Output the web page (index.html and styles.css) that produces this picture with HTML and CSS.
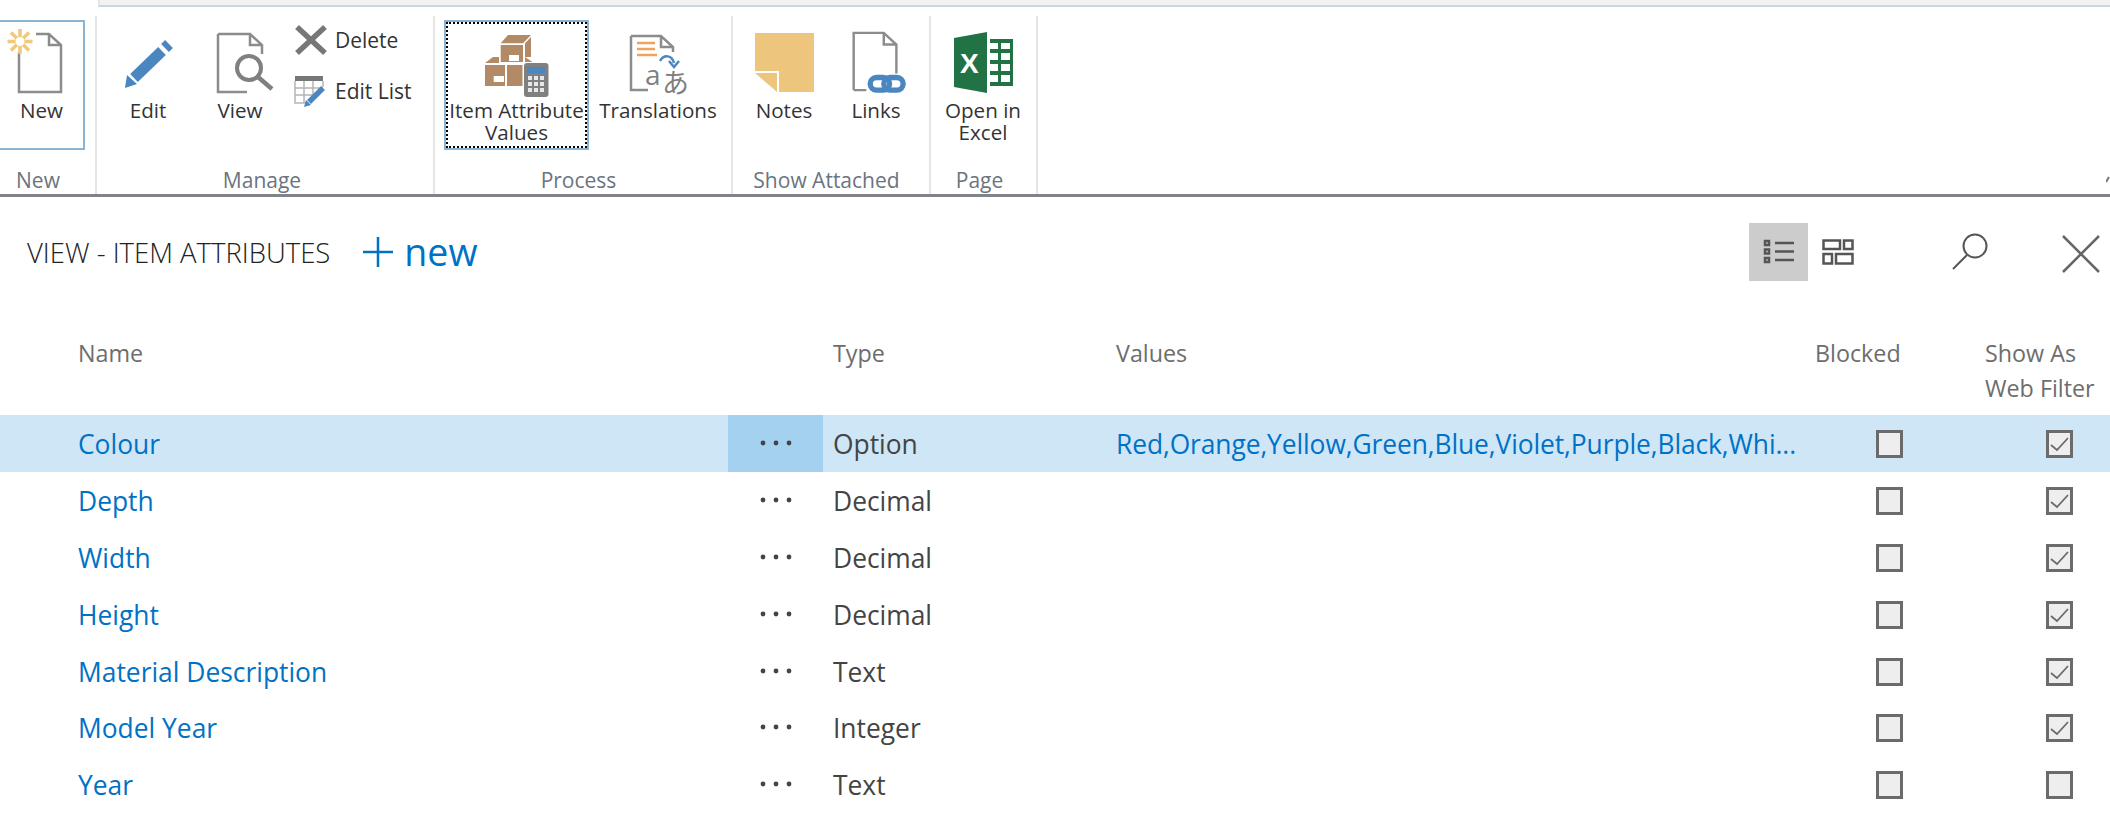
FILE: index.html
```html
<!DOCTYPE html>
<html lang="en">
<head>
  <meta charset="UTF-8">
  <title>View - Item Attributes</title>
  <link rel="stylesheet" href="styles.css">
</head>
<body>

<div class="topbar"></div>

<nav class="ribbon">
  <section class="group group-new">
    <div class="group-items">
      <button class="big-btn btn-new boxed">
        <svg class="icon" width="84" height="66" viewBox="0 0 84 66">
          <path class="doc" d="M19 24V64H61V17L49 6H36M49 6V17H61"/>
          <g class="sun">
            <path d="M20 1V26M7.500 13.500H32.500M11 4.500L29 22.500M29 4.500L11 22.500"/>
          </g>
          <circle cx="20" cy="13.500" r="4.500" fill="#fff"/>
        </svg>
        <span class="btn-label">New</span>
      </button>
    </div>
    <div class="group-label">New</div>
  </section>

  <section class="group group-manage">
    <div class="group-items">
      <button class="big-btn btn-edit">
        <svg class="icon" width="64" height="66" viewBox="0 0 64 66">
          <path d="M18 50L46 23" stroke="#4a86c0" stroke-width="11" fill="none"/>
          <path d="M49 20L53 16" stroke="#4a86c0" stroke-width="11" fill="none"/>
          <path d="M9 60L11 47L21 56Z" fill="#4a86c0"/>
        </svg>
        <span class="btn-label">Edit</span>
      </button>
      <button class="big-btn btn-view">
        <svg class="icon" width="70" height="66" viewBox="0 0 70 66">
          <path class="doc" d="M13 6V64H42M57 26V17L45 6H13M45 6V17H57"/>
          <circle cx="44" cy="40" r="12" fill="#fff" stroke="#808080" stroke-width="4"/>
          <path d="M53 49L67 61" stroke="#808080" stroke-width="4.500" fill="none"/>
        </svg>
        <span class="btn-label">View</span>
      </button>
      <div class="small-btns">
        <button class="small-btn">
          <svg width="34" height="32" viewBox="0 0 34 32">
            <path d="M3 3L31 29M31 3L3 29" stroke="#777" stroke-width="5.500" fill="none"/>
          </svg>
          <span class="btn-label">Delete</span>
        </button>
        <button class="small-btn">
          <svg width="34" height="32" viewBox="0 0 34 32">
            <rect x="1" y="1" width="28" height="5" fill="#777"/>
            <path d="M1 6V28H12M29 6V12M1 13H29M1 20H18M10 6V28M19 6V20" stroke="#b5b5b5" stroke-width="1.500" fill="none"/>
            <path d="M15 27L29 13" stroke="#4a86c0" stroke-width="5.500" fill="none"/>
            <path d="M10 32L12 25L17 30Z" fill="#4a86c0"/>
          </svg>
          <span class="btn-label">Edit List</span>
        </button>
      </div>
    </div>
    <div class="group-label">Manage</div>
  </section>

  <section class="group group-process">
    <div class="group-items">
      <button class="big-btn btn-attr boxed focused">
        <svg class="icon" width="66" height="66" viewBox="0 -6 66 66">
          <g fill="#b38a66">
            <path d="M24 1H47L39 9.300H16.700Z"/>
            <path d="M41 9.300L47 3V23L41 23Z"/>
            <rect x="16.700" y="11" width="22.300" height="17"/>
            <path d="M9 23H15V29H1Z"/>
            <path d="M41 23L50 29H41Z"/>
            <rect x="1" y="31" width="20" height="21"/>
            <rect x="23" y="31" width="20" height="21"/>
          </g>
          <rect x="25" y="21" width="10" height="6" fill="#fff"/>
          <rect x="9.700" y="42" width="10.300" height="6" fill="#fff"/>
          <rect x="38.500" y="28" width="27" height="36" rx="3" fill="#fff"/>
          <rect x="40" y="29" width="24.500" height="34" rx="3" fill="#808080"/>
          <rect x="43" y="33" width="18" height="6" fill="#4a86c0"/>
          <g fill="#e8e8e8">
            <rect x="44" y="42" width="4" height="4"/><rect x="50" y="42" width="4" height="4"/><rect x="56" y="42" width="4" height="4"/>
            <rect x="44" y="48" width="4" height="4"/><rect x="50" y="48" width="4" height="4"/><rect x="56" y="48" width="4" height="4"/>
            <rect x="44" y="54" width="4" height="4"/><rect x="50" y="54" width="4" height="4"/><rect x="56" y="54" width="4" height="4"/>
          </g>
        </svg>
        <span class="btn-label">Item Attribute Values</span>
      </button>
      <button class="big-btn btn-trans">
        <svg class="icon" width="72" height="66" viewBox="0 0 72 66">
          <path class="doc" d="M9 8V62H26M51 24V19L39 8H9M39 8V19H51"/>
          <path d="M15 15H33M15 21H33M15 27H35" stroke="#f0a35e" stroke-width="2.500" fill="none"/>
          <path d="M38 33C42 26 50 27 52 35M47 33L52 39L57 33" stroke="#4a86c0" stroke-width="2.500" fill="none"/>
          <text x="23" y="57" class="glyph-a">a</text>
          <text x="40" y="65" class="glyph-jp">あ</text>
        </svg>
        <span class="btn-label">Translations</span>
      </button>
    </div>
    <div class="group-label">Process</div>
  </section>

  <section class="group group-attached">
    <div class="group-items">
      <button class="big-btn btn-notes">
        <svg class="icon" width="64" height="66" viewBox="0 0 64 66">
          <path d="M3 5H62V64H27V43H3Z" fill="#edc57c"/>
          <path d="M3 45H25V64Z" fill="#edc57c"/>
        </svg>
        <span class="btn-label">Notes</span>
      </button>
      <button class="big-btn btn-links">
        <svg class="icon" width="64" height="68" viewBox="0 0 64 68">
          <path class="doc" d="M9 64V5H40L53 17V47M40 5V17H53M9 64H22"/>
          <rect x="26" y="51" width="20" height="13" rx="6.500" fill="none" stroke="#4a86c0" stroke-width="5.500"/>
          <rect x="40" y="51" width="20" height="13" rx="6.500" fill="none" stroke="#4a86c0" stroke-width="5.500"/>
        </svg>
        <span class="btn-label">Links</span>
      </button>
    </div>
    <div class="group-label">Show Attached</div>
  </section>

  <section class="group group-page">
    <div class="group-items">
      <button class="big-btn btn-excel">
        <svg class="icon" width="64" height="66" viewBox="0 0 64 66">
          <path d="M3 10L36 4V65L3 59Z" fill="#217346"/>
          <rect x="39" y="11" width="23" height="47" fill="#217346"/>
          <g fill="#fff">
            <rect x="39" y="15" width="8" height="6"/><rect x="50" y="15" width="9" height="6"/>
            <rect x="39" y="25" width="8" height="7"/><rect x="50" y="25" width="9" height="7"/>
            <rect x="39" y="36" width="8" height="7"/><rect x="50" y="36" width="9" height="7"/>
            <rect x="39" y="47" width="8" height="7"/><rect x="50" y="47" width="9" height="7"/>
          </g>
          <text x="9" y="45" class="glyph-x">X</text>
        </svg>
        <span class="btn-label">Open in Excel</span>
      </button>
    </div>
    <div class="group-label">Page</div>
  </section>

  <svg class="collapse" width="4" height="10" viewBox="0 0 4 10">
    <path d="M0 8L3 3" stroke="#777" stroke-width="2" fill="none"/>
  </svg>
</nav>

<header class="page-head">
  <h1 class="page-title">VIEW - ITEM ATTRIBUTES</h1>
  <a class="new-link">
    <svg width="32" height="32" viewBox="0 0 32 32">
      <path d="M1 16H31M16 1V31" stroke="#0072c6" stroke-width="2.500" fill="none"/>
    </svg>
    <span>new</span>
  </a>
  <div class="tools">
    <span class="tool tool-active">
      <svg width="32" height="26" viewBox="0 0 32 26">
        <path d="M12 4H31M12 12.500H31M12 21H31" stroke="#555" stroke-width="2.500" fill="none"/>
        <path d="M2 2H6V6H2ZM2 10.500H6V14.500H2ZM2 19H6V23H2Z" fill="none" stroke="#555" stroke-width="2.500"/>
      </svg>
    </span>
    <span class="tool">
      <svg width="32" height="26" viewBox="0 0 32 26">
        <path d="M1.500 1.500H18V10H1.500ZM22 1.500H30.500V10H22ZM1.500 15H10V24.500H1.500ZM14 15H30.500V24.500H14Z" fill="none" stroke="#555" stroke-width="2.500"/>
      </svg>
    </span>
    <svg class="tool-search" width="38" height="38" viewBox="0 0 38 38">
      <circle cx="24" cy="13" r="11.500" fill="none" stroke="#555" stroke-width="2"/>
      <path d="M16 22L2 36" stroke="#555" stroke-width="2" fill="none"/>
    </svg>
    <svg class="tool-close" width="40" height="40" viewBox="0 0 40 40">
      <path d="M2 2L38 38M38 2L2 38" stroke="#666" stroke-width="2.500" fill="none"/>
    </svg>
  </div>
</header>

<div class="list">
  <div class="row head-row">
    <div class="cell cell-name">Name</div>
    <div class="cell"></div>
    <div class="cell cell-type">Type</div>
    <div class="cell cell-values">Values</div>
    <div class="cell">Blocked</div>
    <div class="cell">Show As<br>Web Filter</div>
  </div>

  <div class="row selected">
    <a class="cell cell-name">Colour</a>
    <div class="cell cell-dots"><svg class="dots" width="32" height="6" viewBox="0 0 32 6"><circle cx="3" cy="3" r="2.400"/><circle cx="16" cy="3" r="2.400"/><circle cx="29" cy="3" r="2.400"/></svg></div>
    <div class="cell cell-type">Option</div>
    <a class="cell cell-values">Red,Orange,Yellow,Green,Blue,Violet,Purple,Black,Whi...</a>
    <div class="cell cell-check"><span class="check"></span></div>
    <div class="cell cell-check"><span class="check"><svg width="21" height="22" viewBox="0 0 21 22"><path d="M2 12L8 17L19 5" stroke="#6b6b6b" stroke-width="1.800" fill="none"/></svg></span></div>
  </div>

  <div class="row">
    <a class="cell cell-name">Depth</a>
    <div class="cell cell-dots"><svg class="dots" width="32" height="6" viewBox="0 0 32 6"><circle cx="3" cy="3" r="2.400"/><circle cx="16" cy="3" r="2.400"/><circle cx="29" cy="3" r="2.400"/></svg></div>
    <div class="cell cell-type">Decimal</div>
    <div class="cell cell-values"></div>
    <div class="cell cell-check"><span class="check"></span></div>
    <div class="cell cell-check"><span class="check"><svg width="21" height="22" viewBox="0 0 21 22"><path d="M2 12L8 17L19 5" stroke="#6b6b6b" stroke-width="1.800" fill="none"/></svg></span></div>
  </div>

  <div class="row">
    <a class="cell cell-name">Width</a>
    <div class="cell cell-dots"><svg class="dots" width="32" height="6" viewBox="0 0 32 6"><circle cx="3" cy="3" r="2.400"/><circle cx="16" cy="3" r="2.400"/><circle cx="29" cy="3" r="2.400"/></svg></div>
    <div class="cell cell-type">Decimal</div>
    <div class="cell cell-values"></div>
    <div class="cell cell-check"><span class="check"></span></div>
    <div class="cell cell-check"><span class="check"><svg width="21" height="22" viewBox="0 0 21 22"><path d="M2 12L8 17L19 5" stroke="#6b6b6b" stroke-width="1.800" fill="none"/></svg></span></div>
  </div>

  <div class="row">
    <a class="cell cell-name">Height</a>
    <div class="cell cell-dots"><svg class="dots" width="32" height="6" viewBox="0 0 32 6"><circle cx="3" cy="3" r="2.400"/><circle cx="16" cy="3" r="2.400"/><circle cx="29" cy="3" r="2.400"/></svg></div>
    <div class="cell cell-type">Decimal</div>
    <div class="cell cell-values"></div>
    <div class="cell cell-check"><span class="check"></span></div>
    <div class="cell cell-check"><span class="check"><svg width="21" height="22" viewBox="0 0 21 22"><path d="M2 12L8 17L19 5" stroke="#6b6b6b" stroke-width="1.800" fill="none"/></svg></span></div>
  </div>

  <div class="row">
    <a class="cell cell-name">Material Description</a>
    <div class="cell cell-dots"><svg class="dots" width="32" height="6" viewBox="0 0 32 6"><circle cx="3" cy="3" r="2.400"/><circle cx="16" cy="3" r="2.400"/><circle cx="29" cy="3" r="2.400"/></svg></div>
    <div class="cell cell-type">Text</div>
    <div class="cell cell-values"></div>
    <div class="cell cell-check"><span class="check"></span></div>
    <div class="cell cell-check"><span class="check"><svg width="21" height="22" viewBox="0 0 21 22"><path d="M2 12L8 17L19 5" stroke="#6b6b6b" stroke-width="1.800" fill="none"/></svg></span></div>
  </div>

  <div class="row">
    <a class="cell cell-name">Model Year</a>
    <div class="cell cell-dots"><svg class="dots" width="32" height="6" viewBox="0 0 32 6"><circle cx="3" cy="3" r="2.400"/><circle cx="16" cy="3" r="2.400"/><circle cx="29" cy="3" r="2.400"/></svg></div>
    <div class="cell cell-type">Integer</div>
    <div class="cell cell-values"></div>
    <div class="cell cell-check"><span class="check"></span></div>
    <div class="cell cell-check"><span class="check"><svg width="21" height="22" viewBox="0 0 21 22"><path d="M2 12L8 17L19 5" stroke="#6b6b6b" stroke-width="1.800" fill="none"/></svg></span></div>
  </div>

  <div class="row">
    <a class="cell cell-name">Year</a>
    <div class="cell cell-dots"><svg class="dots" width="32" height="6" viewBox="0 0 32 6"><circle cx="3" cy="3" r="2.400"/><circle cx="16" cy="3" r="2.400"/><circle cx="29" cy="3" r="2.400"/></svg></div>
    <div class="cell cell-type">Text</div>
    <div class="cell cell-values"></div>
    <div class="cell cell-check"><span class="check"></span></div>
    <div class="cell cell-check"><span class="check"></span></div>
  </div>
</div>

</body>
</html>
```

FILE: styles.css
```css
html, body {
  height: 100%;
  overflow: hidden;
}

body {
  margin: 0;
  background: white;
  font-family: 'Open Sans', 'Liberation Sans', sans-serif;
  color: #333;
}

/* top strip */
.topbar {
  height: 5px;
  margin-left: 98px;
  background: #f2f2f2;
  border-left: 2px solid #e5e5e5;
  border-bottom: 2px solid #ccd6df;
}

/* ribbon */
.ribbon {
  position: relative;
  display: flex;
  height: 178px;
  margin-top: 9px;
  border-bottom: 3px solid #808488;
  box-sizing: content-box;
}

.group {
  display: flex;
  flex-direction: column;
  box-sizing: border-box;
  padding-top: 4px;
  border-right: 2px solid #e5e5e5;
}

.group-new { width: 97px; }
.group-manage { width: 338px; padding-left: 5px; }
.group-process { width: 298px; padding-left: 9px; }
.group-attached { width: 198px; padding-left: 5px; }
.group-page { width: 107px; }

.group-items {
  display: flex;
  height: 130px;
}

.group-label {
  margin-top: auto;
  margin-bottom: 3px;
  text-align: center;
  font-size: 21px;
  line-height: 22px;
  color: #6b7480;
}

.group-new .group-label { padding-right: 19px; }
.group-manage .group-label { padding-right: 11px; }
.group-process .group-label { padding-right: 18px; }
.group-attached .group-label { padding-right: 14px; }
.group-page .group-label { padding-right: 8px; }

.big-btn, .small-btn {
  padding: 0;
  border: none;
  background: none;
  font-family: inherit;
  color: #333;
  cursor: pointer;
}

.big-btn {
  display: flex;
  flex-direction: column;
  align-items: center;
  box-sizing: border-box;
  width: 92px;
  height: 130px;
  padding-top: 8px;
  font-size: 20.6px;
  line-height: 22px;
}

.big-btn .icon {
  display: block;
  flex: none;
  height: 66px;
  margin-bottom: 5px;
  overflow: visible;
}

.boxed {
  border: 2px solid #8ab4d2;
  padding-top: 6px;
}

.btn-new {
  width: 85px;
  border-left: none;
}

.btn-attr { width: 145px; }
.btn-trans { width: 130px; margin-left: 4px; }
.btn-excel { width: 104px; }

.focused {
  outline: 2px dotted #000;
  outline-offset: -4px;
}

.doc {
  fill: none;
  stroke: #8c8c8c;
  stroke-width: 2.5;
}

.sun path {
  fill: none;
  stroke: #f0c87e;
  stroke-width: 3.6;
}

.glyph-a {
  font-family: 'Open Sans', sans-serif;
  font-size: 28px;
  fill: #7f7f7f;
}

.glyph-jp {
  font-family: 'Noto Sans CJK JP', sans-serif;
  font-size: 27px;
  fill: #7f7f7f;
}

.glyph-x {
  font-family: 'Liberation Sans', sans-serif;
  font-weight: 700;
  font-size: 28px;
  fill: white;
}

.small-btns {
  display: flex;
  flex-direction: column;
  gap: 19px;
  margin-left: 8px;
  padding-top: 4px;
}

.small-btn {
  display: flex;
  align-items: center;
  gap: 7px;
  height: 32px;
  font-size: 21px;
}

.collapse {
  position: absolute;
  right: 0;
  bottom: 10px;
}

/* title line */
.page-head {
  display: flex;
  align-items: center;
  height: 112px;
  padding-left: 27px;
  padding-bottom: 2px;
  box-sizing: border-box;
}

.page-title {
  margin: 0 32px 0 0;
  font-size: 27.5px;
  font-weight: 300;
  color: #222;
}

.new-link {
  display: flex;
  align-items: center;
  gap: 10px;
  font-size: 37.5px;
  line-height: 40px;
  color: #0072c6;
}

.tools {
  display: flex;
  align-items: center;
  margin-left: auto;
  height: 100%;
  padding-bottom: 1px;
  box-sizing: border-box;
}

.tool {
  display: flex;
  align-items: center;
  justify-content: center;
  width: 59px;
  height: 58px;
}

.tool-active {
  background: #ccc;
}

.tool-search { margin-left: 84px; }
.tool-close { margin-left: 72px; margin-right: 9px; margin-top: 4px; }

/* list */
.list {
  font-size: 26.4px;
}

.row {
  display: grid;
  grid-template-columns: 728px 95px 283px 709px 170px 125px;
  align-items: center;
  height: 56.8px;
  color: #444;
}

.head-row {
  align-items: start;
  height: 106px;
  font-size: 23.3px;
  line-height: 35px;
  color: #6d6d6d;
}

.head-row .cell { padding-top: 27px; margin-top: 0; }

.cell {
  box-sizing: border-box;
  min-width: 0;
}

.cell-name, .cell-type, .cell-values, .cell-check {
  margin-top: 2px;
}

.cell-name {
  padding-left: 78px;
}

a.cell, .new-link {
  color: #0072c6;
  cursor: pointer;
}

.cell-type, .cell-values {
  padding-left: 10px;
}

a.cell-values {
  white-space: nowrap;
  letter-spacing: -0.1px;
}

.cell-dots {
  display: flex;
  align-items: center;
  justify-content: center;
  height: 100%;
}

.dots { fill: #444; }

.selected { background: #cfe6f7; }
.selected .cell-dots { background: #a5d1f1; }

.cell-check {
  display: flex;
  padding-left: 61px;
}

.check {
  display: block;
  width: 27px;
  height: 28px;
  box-sizing: border-box;
  border: 3px solid #6b6b6b;
  background: #eee;
}

.check svg { display: block; }
```
